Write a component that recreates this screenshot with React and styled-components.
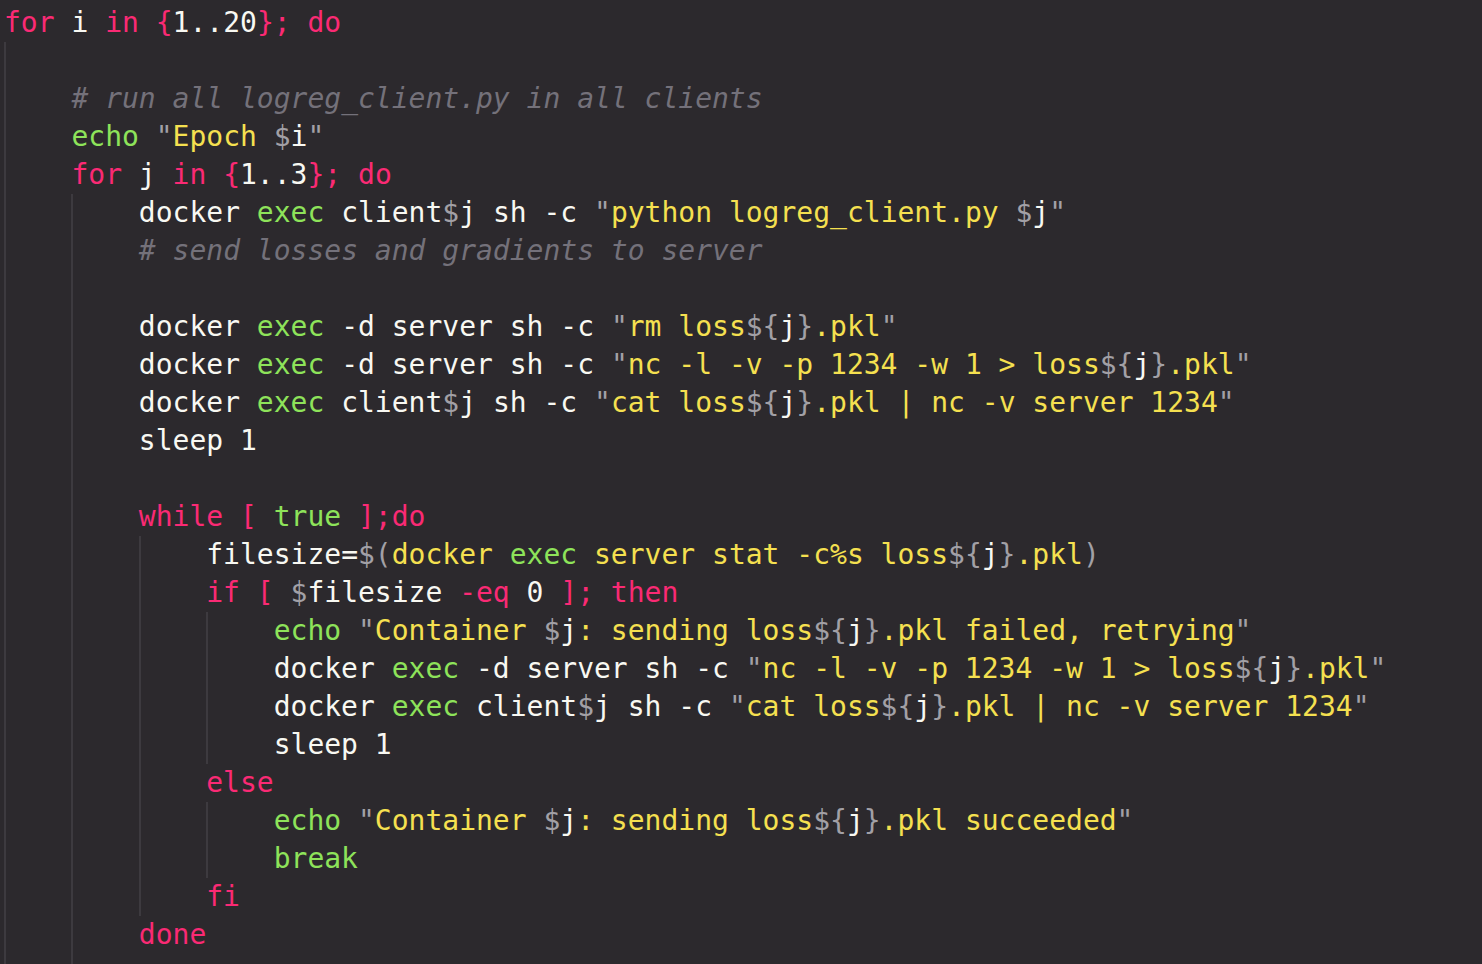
import React from 'react';
import styled, { createGlobalStyle } from 'styled-components';

const GlobalStyle = createGlobalStyle`
  html, body {
    margin: 0;
    padding: 0;
    background: #2c292d;
    overflow: hidden;
  }
`;

function App() {
  return (
    <>
      <GlobalStyle />
      <Editor>
        <Line><K>for</K> i <K>in</K> <K>{'{'}</K>1..20<K>{'}'}; do</K></Line>
        <Block>
          <Line />
          <Line><C># run all logreg_client.py in all clients</C></Line>
          <Line><G>echo</G> <S>Epoch <V n="i" /></S></Line>
          <Line><K>for</K> j <K>in</K> <K>{'{'}</K>1..3<K>{'}'}; do</K></Line>
          <Block>
            <Line>docker <G>exec</G> client<V n="j" /> sh -c <S>python logreg_client.py <V n="j" /></S></Line>
            <Line><C># send losses and gradients to server</C></Line>
            <Line />
            <Line>docker <G>exec</G> -d server sh -c <S>rm loss<V n="j" b />.pkl</S></Line>
            <Line>docker <G>exec</G> -d server sh -c <S>nc -l -v -p 1234 -w 1 &gt; loss<V n="j" b />.pkl</S></Line>
            <Line>docker <G>exec</G> client<V n="j" /> sh -c <S>cat loss<V n="j" b />.pkl | nc -v server 1234</S></Line>
            <Line>sleep 1</Line>
            <Line />
            <Line><K>while [</K> <G>true</G> <K>];do</K></Line>
            <Block>
              <Line>filesize=<P>$(</P><Y>docker</Y> <G>exec</G> <Y>server stat -c%s loss</Y><V n="j" b /><Y>.pkl</Y><P>)</P></Line>
              <Line><K>if [</K> <V n="filesize" /> <K>-eq</K> 0 <K>]; then</K></Line>
              <Block>
                <Line><G>echo</G> <S>Container <V n="j" />: sending loss<V n="j" b />.pkl failed, retrying</S></Line>
                <Line>docker <G>exec</G> -d server sh -c <S>nc -l -v -p 1234 -w 1 &gt; loss<V n="j" b />.pkl</S></Line>
                <Line>docker <G>exec</G> client<V n="j" /> sh -c <S>cat loss<V n="j" b />.pkl | nc -v server 1234</S></Line>
                <Line>sleep 1</Line>
              </Block>
              <Line><K>else</K></Line>
              <Block>
                <Line><G>echo</G> <S>Container <V n="j" />: sending loss<V n="j" b />.pkl succeeded</S></Line>
                <Line><G>break</G></Line>
              </Block>
              <Line><K>fi</K></Line>
            </Block>
            <Line><K>done</K></Line>
            <Line />
          </Block>
          <Line />
        </Block>
      </Editor>
    </>
  );
}

export default App;

// $name or ${name}: sigil and braces grey, the name itself white
function V({ n, b }) {
  return b ? (
    <><P>{'${'}</P><W>{n}</W><P>{'}'}</P></>
  ) : (
    <><P>$</P><W>{n}</W></>
  );
}

// double-quoted string: grey quotes, yellow body
function S({ children }) {
  return <><P>"</P><Y>{children}</Y><P>"</P></>;
}

const Editor = styled.div`
  height: 100vh;
  box-sizing: border-box;
  padding: 4px 0 0 4px;
  background: #2c292d;
  color: #f8f8f2;
  font-family: "DejaVu Sans Mono", "Liberation Mono", monospace;
  font-size: 28px;
  overflow: hidden;
`;

const Line = styled.div`
  height: 38px;
  line-height: 38px;
  white-space: pre;
`;

const Block = styled.div`
  border-left: 2px solid #3d3a3f;
  padding-left: calc(4ch - 2px);
`;

const K = styled.span`
  color: #fa2a74;
`;

const G = styled.span`
  color: #8ee35a;
`;

const Y = styled.span`
  color: #f5e050;
`;

const P = styled.span`
  color: #a2a0a6;
`;

const W = styled.span`
  color: #f8f8f2;
`;

const C = styled.span`
  color: #74717a;
  font-style: italic;
`;
